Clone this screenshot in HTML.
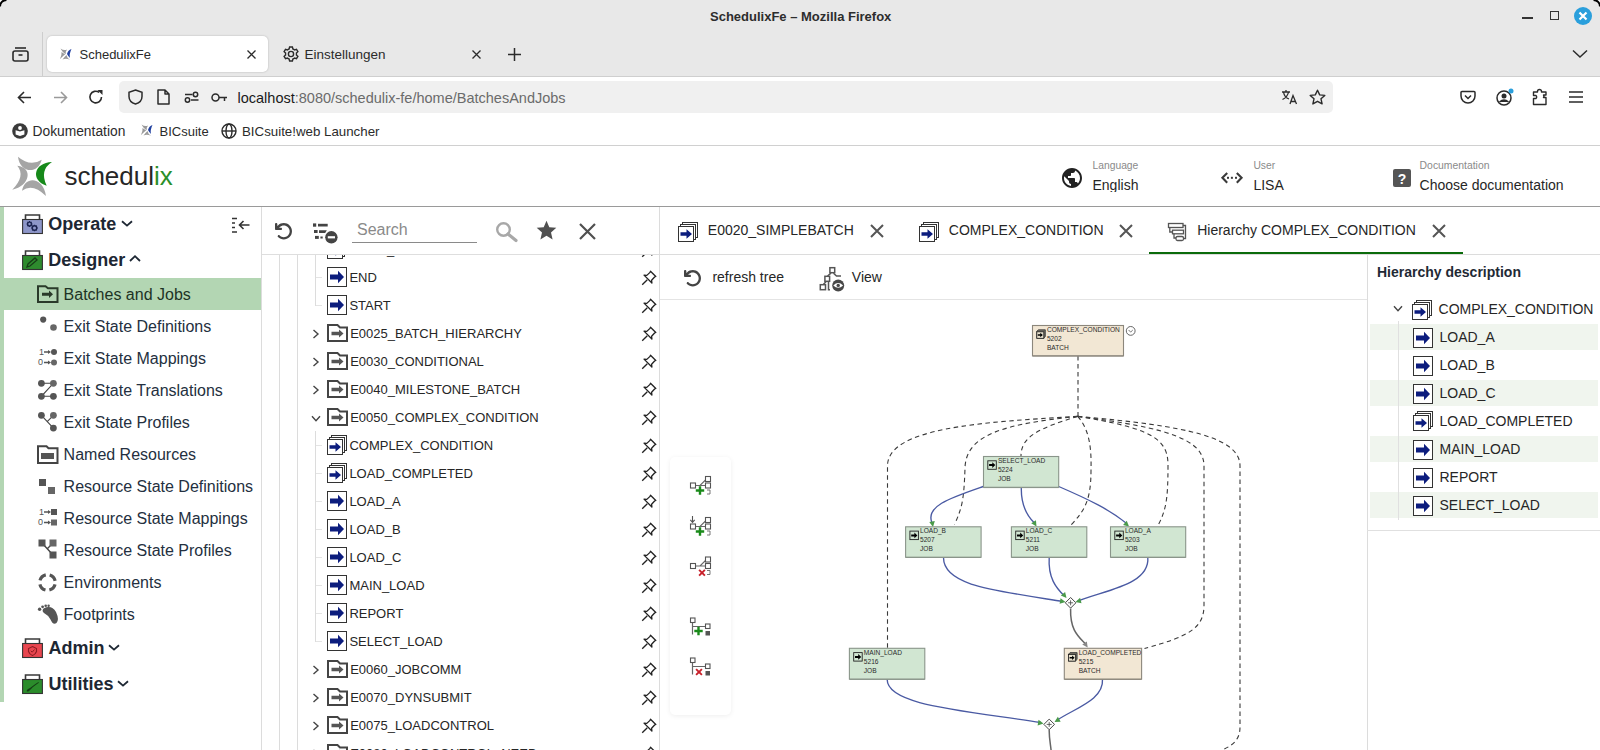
<!DOCTYPE html><html><head><meta charset="utf-8"><style>
html,body{margin:0;padding:0;}
body{width:1600px;height:750px;position:relative;overflow:hidden;background:#fff;font-family:"Liberation Sans",sans-serif;}
.t{position:absolute;white-space:nowrap;}
svg{overflow:visible}
</style></head><body>
<div style="position:absolute;left:0px;top:0px;width:1600px;height:76px;background:#e8e8e8"></div>
<svg style="position:absolute;left:0px;top:0px;" width="10" height="10" viewBox="0 0 10 10"><path d="M0 0H8A8 8 0 0 0 0 8Z" fill="#fff"/><path d="M0 6.5A6.5 6.5 0 0 1 6.5 0" fill="none" stroke="#000" stroke-width="2"/></svg>
<svg style="position:absolute;left:1590px;top:0px;" width="10" height="10" viewBox="0 0 10 10"><path d="M10 0H2A8 8 0 0 1 10 8Z" fill="#fff"/><path d="M3.5 0A6.5 6.5 0 0 1 10 6.5" fill="none" stroke="#000" stroke-width="2"/></svg>
<div class="t" style="left:710px;top:10.00px;font-size:13px;line-height:13px;color:#2d2d2d;font-weight:700;font-family:"Liberation Sans", sans-serif;">SchedulixFe – Mozilla Firefox</div>
<div style="position:absolute;left:1522px;top:17px;width:11px;height:2px;background:#333"></div>
<div style="position:absolute;left:1550px;top:11px;width:9px;height:9px;border:1.6px solid #333;box-sizing:border-box"></div>
<svg style="position:absolute;left:1574px;top:7px;" width="18" height="18" viewBox="0 0 18 18"><circle cx="9" cy="9" r="9" fill="#2a9fdc"/><path d="M5.5 5.5L12.5 12.5M12.5 5.5L5.5 12.5" stroke="#fff" stroke-width="2.2"/></svg>
<div style="position:absolute;left:0px;top:76px;width:1600px;height:1px;background:#cfcfcf"></div>
<svg style="position:absolute;left:12px;top:46px;" width="17" height="16" viewBox="0 0 17 16"><rect x="1" y="5" width="15" height="10" rx="2" fill="none" stroke="#2b2b2b" stroke-width="1.6"/><path d="M3 2H14" stroke="#2b2b2b" stroke-width="1.6"/><path d="M6.5 9H10.5" stroke="#2b2b2b" stroke-width="1.6"/></svg>
<div style="position:absolute;left:42px;top:32px;width:1px;height:44px;background:#cdcdcd"></div>
<div style="position:absolute;left:47px;top:36px;width:221px;height:36px;background:#fff;border-radius:5px;box-shadow:0 0 2px rgba(0,0,0,.25)"></div>
<svg style="position:absolute;left:60px;top:48px;" width="12" height="12" viewBox="0 0 12 12"><path d="M0.5 0.5Q4 3 7 1.5Q5 4 6 6Q3 5 0.5 0.5Z" fill="#9a9a9a"/><path d="M0 11Q2 7 1.5 4Q4 6 5.5 6Q3 8 0 11Z" fill="#9a9a9a"/><path d="M2.5 11.5Q5 8 6.5 7Q7 10 10 11.8Q6 10 2.5 11.5Z" fill="#9a9a9a"/><path d="M11.5 1Q8 2 7 6Q8 8 10 10Q9 6 11.5 1Z" fill="#1f3f9f"/></svg>
<div class="t" style="left:79.5px;top:48.00px;font-size:13px;line-height:13px;color:#2b2b2b;font-weight:400;font-family:"Liberation Sans", sans-serif;">SchedulixFe</div>
<svg style="position:absolute;left:247px;top:50px;" width="9" height="9" viewBox="0 0 9 9"><path d="M0.5 0.5L8.5 8.5M8.5 0.5L0.5 8.5" stroke="#2b2b2b" stroke-width="1.3"/></svg>
<svg style="position:absolute;left:283px;top:46px;" width="16" height="16" viewBox="0 0 16 16"><g fill="none" stroke="#2b2b2b" stroke-width="1.4"><circle cx="8" cy="8" r="2.6"/><path d="M6.6 1H9.4L9.9 3A5.3 5.3 0 0 1 11.6 4L13.5 3.3L14.9 5.7L13.4 7.1A5.3 5.3 0 0 1 13.4 8.9L14.9 10.3L13.5 12.7L11.6 12A5.3 5.3 0 0 1 9.9 13L9.4 15H6.6L6.1 13A5.3 5.3 0 0 1 4.4 12L2.5 12.7L1.1 10.3L2.6 8.9A5.3 5.3 0 0 1 2.6 7.1L1.1 5.7L2.5 3.3L4.4 4A5.3 5.3 0 0 1 6.1 3Z"/></g></svg>
<div class="t" style="left:304.5px;top:48.00px;font-size:13.5px;line-height:13.5px;color:#2b2b2b;font-weight:400;font-family:"Liberation Sans", sans-serif;">Einstellungen</div>
<svg style="position:absolute;left:472px;top:50px;" width="9" height="9" viewBox="0 0 9 9"><path d="M0.5 0.5L8.5 8.5M8.5 0.5L0.5 8.5" stroke="#2b2b2b" stroke-width="1.3"/></svg>
<svg style="position:absolute;left:508px;top:48px;" width="13" height="13" viewBox="0 0 13 13"><path d="M6.5 0V13M0 6.5H13" stroke="#2b2b2b" stroke-width="1.5"/></svg>
<svg style="position:absolute;left:1572px;top:49px;" width="16" height="10" viewBox="0 0 16 10"><path d="M1 1.5L8 8L15 1.5" fill="none" stroke="#2b2b2b" stroke-width="1.5"/></svg>
<div style="position:absolute;left:0px;top:77px;width:1600px;height:68px;background:#fff"></div>
<div style="position:absolute;left:0px;top:145px;width:1600px;height:1px;background:#d0d0d0"></div>
<svg style="position:absolute;left:17px;top:91px;" width="15" height="13" viewBox="0 0 15 13"><path d="M14 6.5H1.5M7 1L1.5 6.5L7 12" fill="none" stroke="#2b2b2b" stroke-width="1.6"/></svg>
<svg style="position:absolute;left:53px;top:91px;" width="15" height="13" viewBox="0 0 15 13"><path d="M1 6.5H13.5M8 1L13.5 6.5L8 12" fill="none" stroke="#9a9a9a" stroke-width="1.6"/></svg>
<svg style="position:absolute;left:88px;top:89px;" width="16" height="16" viewBox="0 0 16 16"><path d="M13.5 8A5.8 5.8 0 1 1 11.2 3.4" fill="none" stroke="#2b2b2b" stroke-width="1.6"/><path d="M9.5 1H14.5V6Z" fill="#2b2b2b"/></svg>
<div style="position:absolute;left:119px;top:81px;width:1214px;height:32px;background:#f0f0f0;border-radius:5px"></div>
<svg style="position:absolute;left:128px;top:89px;" width="15" height="16" viewBox="0 0 15 16"><path d="M7.5 1L14 3.2V7.5C14 11.5 11 14 7.5 15C4 14 1 11.5 1 7.5V3.2Z" fill="none" stroke="#2b2b2b" stroke-width="1.5"/></svg>
<svg style="position:absolute;left:157px;top:89px;" width="13" height="16" viewBox="0 0 13 16"><path d="M1 1H8L12 5V15H1Z M8 1V5H12" fill="none" stroke="#2b2b2b" stroke-width="1.5" stroke-linejoin="round"/></svg>
<svg style="position:absolute;left:184px;top:90px;" width="15" height="14" viewBox="0 0 15 14"><g fill="none" stroke="#2b2b2b" stroke-width="1.5"><path d="M1 4.5H8.5"/><circle cx="11.5" cy="4.5" r="2.2"/><path d="M14.5 10H7"/><circle cx="3.5" cy="10" r="2.2"/></g></svg>
<svg style="position:absolute;left:211px;top:92px;" width="17" height="11" viewBox="0 0 17 11"><g fill="none" stroke="#2b2b2b" stroke-width="1.5"><circle cx="4.5" cy="5.5" r="3.5"/><path d="M8 5.5H16M13.5 5.5V9"/></g></svg>
<div class="t" style="left:237.5px;top:91.00px;font-size:14.5px;line-height:14.5px;color:#6b6b6b;font-weight:400;font-family:"Liberation Sans", sans-serif;"><span style="color:#1a1a1a">localhost</span><span style="color:#6b6b6b">:8080/schedulix-fe/home/BatchesAndJobs</span></div>
<svg style="position:absolute;left:1281px;top:89px;" width="17" height="16" viewBox="0 0 17 16"><g fill="none" stroke="#2b2b2b" stroke-width="1.3"><path d="M1 3H9M5 1V3M2.5 3C3 6 5 9 8 10M7.5 3C7 6 4.5 9 1.5 10.5"/><path d="M9 15L12 6.5L15.5 15M10 12.5H14.5"/></g></svg>
<svg style="position:absolute;left:1309px;top:89px;" width="17" height="16" viewBox="0 0 17 16"><path d="M8.5 1.2L10.7 5.9L15.8 6.4L12 9.8L13.1 14.9L8.5 12.3L3.9 14.9L5 9.8L1.2 6.4L6.3 5.9Z" fill="none" stroke="#2b2b2b" stroke-width="1.4" stroke-linejoin="round"/></svg>
<svg style="position:absolute;left:1460px;top:89px;" width="16" height="16" viewBox="0 0 16 16"><path d="M2 2.5H14A1 1 0 0 1 15 3.5V7A7 7 0 0 1 1 7V3.5A1 1 0 0 1 2 2.5Z" fill="none" stroke="#2b2b2b" stroke-width="1.5"/><path d="M5 6.5L8 9.5L11 6.5" fill="none" stroke="#2b2b2b" stroke-width="1.5"/></svg>
<svg style="position:absolute;left:1496px;top:88px;" width="19" height="18" viewBox="0 0 19 18"><circle cx="8" cy="10" r="7" fill="none" stroke="#2b2b2b" stroke-width="1.5"/><circle cx="8" cy="8" r="2.5" fill="#2b2b2b"/><path d="M3.5 14Q8 10 12.5 14" fill="#2b2b2b" stroke="#2b2b2b" stroke-width="1.5"/><circle cx="15" cy="3" r="2.5" fill="#2a9fdc"/></svg>
<svg style="position:absolute;left:1532px;top:89px;" width="17" height="17" viewBox="0 0 17 17"><path d="M1.5 9.5V15.5H14V8.5H11.5A2 2 0 0 0 11.5 6H14V3H9.5V2.5A2 2 0 0 0 5.5 2.5V3H1.5V6.5H4A2 2 0 0 1 4 9.5Z" fill="none" stroke="#2b2b2b" stroke-width="1.4" stroke-linejoin="round"/></svg>
<svg style="position:absolute;left:1568px;top:90px;" width="16" height="14" viewBox="0 0 16 14"><path d="M1 2H15M1 7H15M1 12H15" stroke="#2b2b2b" stroke-width="1.6"/></svg>
<svg style="position:absolute;left:12px;top:123px;" width="16" height="16" viewBox="0 0 16 16"><circle cx="8" cy="8" r="7.8" fill="#3a3a3a"/><path d="M3.6 7.2L8 8.6L12.4 7.2V11.6L8 13L3.6 11.6Z" fill="#fff"/><circle cx="8" cy="5" r="1.9" fill="#fff"/></svg>
<div class="t" style="left:32.5px;top:125.00px;font-size:13.8px;line-height:13.8px;color:#2b2b2b;font-weight:400;font-family:"Liberation Sans", sans-serif;">Dokumentation</div>
<svg style="position:absolute;left:141px;top:124px;" width="12" height="13" viewBox="0 0 12 13"><path d="M0.5 0.5Q4 3 7 1.5Q5 4 6 6Q3 5 0.5 0.5Z" fill="#9a9a9a"/><path d="M0 11Q2 7 1.5 4Q4 6 5.5 6Q3 8 0 11Z" fill="#9a9a9a"/><path d="M2.5 11.5Q5 8 6.5 7Q7 10 10 11.8Q6 10 2.5 11.5Z" fill="#9a9a9a"/><path d="M11.5 1Q8 2 7 6Q8 8 10 10Q9 6 11.5 1Z" fill="#1f3f9f"/></svg>
<div class="t" style="left:159.5px;top:125.00px;font-size:13px;line-height:13px;color:#2b2b2b;font-weight:400;font-family:"Liberation Sans", sans-serif;">BICsuite</div>
<svg style="position:absolute;left:221px;top:123px;" width="16" height="16" viewBox="0 0 16 16"><g fill="none" stroke="#2b2b2b" stroke-width="1.4"><circle cx="8" cy="8" r="7"/><ellipse cx="8" cy="8" rx="3" ry="7"/><path d="M1 8H15"/></g></svg>
<div class="t" style="left:242px;top:125.00px;font-size:13.3px;line-height:13.3px;color:#2b2b2b;font-weight:400;font-family:"Liberation Sans", sans-serif;">BICsuite!web Launcher</div>
<div style="position:absolute;left:0px;top:146px;width:1600px;height:60px;background:#fff"></div>
<div style="position:absolute;left:0px;top:206px;width:1600px;height:1px;background:#9a9a9a"></div>
<svg style="position:absolute;left:10px;top:154px;" width="46" height="46" viewBox="0 0 46 46"><g transform="translate(-10,-154)"><path d="M18.0 156.7Q30.1 167.2 41.7 159.7C37.7 175.1 19.7 172.8 18.0 156.7Z" fill="#a5a5a5"/><path d="M17.3 165.7Q25.8 175.7 12.3 189.7C29.8 185.9 33.6 167.6 17.3 165.7Z" fill="#a5a5a5"/><path d="M22.0 190.7Q32.6 182.7 46.0 196.0C43.8 178.2 25.5 174.2 22.0 190.7Z" fill="#a5a5a5"/><path d="M52.0 162.0Q39.2 170.2 46.7 185.7C29.9 180.4 34.0 162.4 52.0 162.0Z" fill="#16891a"/></g></svg>
<div class="t" style="left:64.4px;top:163.00px;font-size:26px;line-height:26px;color:#262626;font-weight:400;font-family:"Liberation Sans", sans-serif;">schedul<span style="color:#2a8f2a">ix</span></div>
<svg style="position:absolute;left:1062px;top:168px" width="20" height="20" viewBox="2 2 20 20"><path fill="#222" d="M12 2C6.48 2 2 6.48 2 12s4.48 10 10 10 10-4.48 10-10S17.52 2 12 2zm-1 17.93c-3.950-.49-7-3.85-7-7.930 0-.62.08-1.21.21-1.79L9 15v1c0 1.1.9 2 2 2v1.93zm6.9-2.54c-.26-.81-1-1.39-1.9-1.39h-1v-3c0-.55-.45-1-1-1H8v-2h2c.55 0 1-.45 1-1V7h2c1.1 0 2-.9 2-2v-.41c2.93 1.19 5 4.06 5 7.41 0 2.080-.8 3.970-2.1 5.39z"/></svg>
<div class="t" style="left:1092.5px;top:161.00px;font-size:10.3px;line-height:10.3px;color:#8a8a8a;font-weight:400;font-family:"Liberation Sans", sans-serif;">Language</div>
<div style="position:absolute;left:1090px;top:172px;width:100px;height:20px;overflow:hidden"></div>
<div style="position:absolute;left:1092.5px;top:172px;width:100px;height:20px;overflow:hidden"><div class="t" style="left:0;top:5.95px;font-size:14px;line-height:14px;color:#262626">English</div></div>
<svg style="position:absolute;left:1221px;top:172px;" width="22" height="12" viewBox="0 0 22 12"><g fill="none" stroke="#3a3a3a" stroke-width="2.1"><path d="M6.2 0.9L1.4 5.8L6.2 10.7M15.8 0.9L20.6 5.8L15.8 10.7"/></g><g fill="#3a3a3a"><rect x="6" y="4.8" width="2" height="2"/><rect x="9.9" y="4.8" width="2" height="2"/><rect x="14" y="4.8" width="2" height="2"/></g></svg>
<div class="t" style="left:1253.4px;top:161.00px;font-size:10.3px;line-height:10.3px;color:#8a8a8a;font-weight:400;font-family:"Liberation Sans", sans-serif;">User</div>
<div class="t" style="left:1253.4px;top:178.00px;font-size:14px;line-height:14px;color:#262626;font-weight:400;font-family:"Liberation Sans", sans-serif;">LISA</div>
<svg style="position:absolute;left:1393px;top:169px;" width="18" height="18" viewBox="0 0 18 18"><rect x="0" y="0" width="18" height="18" rx="2" fill="#555"/><text x="9" y="14.5" text-anchor="middle" font-family="Liberation Sans" font-weight="700" font-size="14" fill="#fff">?</text></svg>
<div class="t" style="left:1419.6px;top:161.00px;font-size:10.4px;line-height:10.4px;color:#8a8a8a;font-weight:400;font-family:"Liberation Sans", sans-serif;">Documentation</div>
<div class="t" style="left:1419.6px;top:178.00px;font-size:14px;line-height:14px;color:#262626;font-weight:400;font-family:"Liberation Sans", sans-serif;">Choose documentation</div>
<div style="position:absolute;left:0px;top:207px;width:4px;height:495px;background:#b3d6b3"></div>
<div style="position:absolute;left:261px;top:207px;width:1px;height:543px;background:#dcdcdc"></div>
<svg style="position:absolute;left:22px;top:214px;" width="21" height="20" viewBox="0 0 21 20"><path d="M3.5 5.5V1H17.5V5.5" fill="none" stroke="#3a3a3a" stroke-width="1.6"/><rect x="0.6" y="5.5" width="19.8" height="14" fill="#8d96c9" stroke="#333" stroke-width="1.1"/><g fill="none" stroke="#1b2350" stroke-width="1.3"><circle cx="7.5" cy="10" r="1.9"/><circle cx="12.5" cy="14" r="2.3"/></g><g stroke="#1b2350" stroke-width="1.2"><path d="M7.5 7V13M4.5 10H10.5M5.4 7.9L9.6 12.1M9.6 7.9L5.4 12.1"/><path d="M12.5 10.7V17.3M9.2 14H15.8M10.2 11.7L14.8 16.3M14.8 11.7L10.2 16.3"/></g><circle cx="7.5" cy="10" r="1.2" fill="#8d96c9"/><circle cx="12.5" cy="14" r="1.5" fill="#8d96c9"/></svg>
<div class="t" style="left:48.3px;top:215.00px;font-size:18px;line-height:18px;color:#1d2733;font-weight:700;font-family:"Liberation Sans", sans-serif;letter-spacing:-0.75px">Operate</div>
<svg style="position:absolute;left:121px;top:220px;" width="12" height="7" viewBox="0 0 12 7"><path d="M1 1.2L6.0 5.6L11 1.2" fill="none" stroke="#1d2733" stroke-width="1.8"/></svg>
<svg style="position:absolute;left:231px;top:217px;" width="20" height="17" viewBox="0 0 20 17"><g stroke="#333" stroke-width="1.6"><path d="M1 1.5H6M1 6H4M1 10.5H4M1 15H6"/><path d="M18.5 8H9M12.5 4L8.5 8L12.5 12" fill="none"/></g></svg>
<svg style="position:absolute;left:22px;top:250px;" width="21" height="20" viewBox="0 0 21 20"><path d="M3.5 5.5V1H17.5V5.5" fill="none" stroke="#3a3a3a" stroke-width="1.6"/><rect x="0.6" y="5.5" width="19.8" height="14" fill="#2e8b2e" stroke="#333" stroke-width="1.1"/><path d="M5 17L6 14L13 8L15 10L8 16Z" fill="none" stroke="#173d17" stroke-width="1.3"/></svg>
<div class="t" style="left:48.3px;top:251.00px;font-size:18px;line-height:18px;color:#1d2733;font-weight:700;font-family:"Liberation Sans", sans-serif;letter-spacing:-0.62px">Designer</div>
<svg style="position:absolute;left:129px;top:255px;" width="12" height="7" viewBox="0 0 12 7"><path d="M1 6L6 1.2L11 6" fill="none" stroke="#1d2733" stroke-width="1.8"/></svg>
<div style="position:absolute;left:0px;top:278px;width:261px;height:32px;background:#b3d6b3"></div>
<div class="t" style="left:63.6px;top:287.00px;font-size:16px;line-height:16px;color:#1d3325;font-weight:400;font-family:"Liberation Sans", sans-serif;">Batches and Jobs</div>
<div class="t" style="left:63.6px;top:319.00px;font-size:16px;line-height:16px;color:#243040;font-weight:400;font-family:"Liberation Sans", sans-serif;">Exit State Definitions</div>
<div class="t" style="left:63.6px;top:351.00px;font-size:16px;line-height:16px;color:#243040;font-weight:400;font-family:"Liberation Sans", sans-serif;">Exit State Mappings</div>
<div class="t" style="left:63.6px;top:383.00px;font-size:16px;line-height:16px;color:#243040;font-weight:400;font-family:"Liberation Sans", sans-serif;">Exit State Translations</div>
<div class="t" style="left:63.6px;top:415.00px;font-size:16px;line-height:16px;color:#243040;font-weight:400;font-family:"Liberation Sans", sans-serif;">Exit State Profiles</div>
<div class="t" style="left:63.6px;top:447.00px;font-size:16px;line-height:16px;color:#243040;font-weight:400;font-family:"Liberation Sans", sans-serif;">Named Resources</div>
<div class="t" style="left:63.6px;top:479.00px;font-size:16px;line-height:16px;color:#243040;font-weight:400;font-family:"Liberation Sans", sans-serif;">Resource State Definitions</div>
<div class="t" style="left:63.6px;top:511.00px;font-size:16px;line-height:16px;color:#243040;font-weight:400;font-family:"Liberation Sans", sans-serif;">Resource State Mappings</div>
<div class="t" style="left:63.6px;top:543.00px;font-size:16px;line-height:16px;color:#243040;font-weight:400;font-family:"Liberation Sans", sans-serif;">Resource State Profiles</div>
<div class="t" style="left:63.6px;top:575.00px;font-size:16px;line-height:16px;color:#243040;font-weight:400;font-family:"Liberation Sans", sans-serif;">Environments</div>
<div class="t" style="left:63.6px;top:607.00px;font-size:16px;line-height:16px;color:#243040;font-weight:400;font-family:"Liberation Sans", sans-serif;">Footprints</div>
<svg style="position:absolute;left:37px;top:285px;" width="22" height="19" viewBox="0 0 22 19"><path d="M1 17V1.2H8.5L11 3.2H20.5V17Z" fill="none" stroke="#2a3a2a" stroke-width="2"/><path d="M5 7.8H12V5.5L16 9.3L12 13.1V10.8H5Z" fill="#2a3a2a"/></svg>
<svg style="position:absolute;left:37px;top:314px;" width="22" height="18" viewBox="0 0 22 18"><circle cx="6.2" cy="5.6" r="3.1" fill="#555"/><circle cx="16.5" cy="13.5" r="3.3" fill="#666"/></svg>
<svg style="position:absolute;left:37px;top:346px;" width="22" height="20" viewBox="0 0 22 20"><text x="2" y="8.5" font-family="Liberation Sans" font-size="9" fill="#555">1</text><text x="1" y="19" font-family="Liberation Sans" font-size="9" fill="#555">0</text><path d="M7 6H12M7 16.5H12" stroke="#555" stroke-width="1.3"/><path d="M11 4L14 6L11 8ZM11 14.5L14 16.5L11 18.5Z" fill="#555"/><circle cx="17" cy="6" r="3" fill="#555"/><circle cx="17" cy="16.5" r="3" fill="#666"/></svg>
<svg style="position:absolute;left:37px;top:378px;" width="22" height="22" viewBox="0 0 22 22"><g stroke="#444" stroke-width="1.1" fill="none"><path d="M4.4 5.3H16.4L4.4 18.3H16.4"/></g><circle cx="4.4" cy="5.3" r="3.4" fill="#555"/><circle cx="16.4" cy="5.3" r="3.4" fill="#666"/><circle cx="4.4" cy="18.3" r="3.4" fill="#555"/><circle cx="16.4" cy="18.3" r="3.4" fill="#555"/></svg>
<svg style="position:absolute;left:37px;top:410px;" width="22" height="22" viewBox="0 0 22 22"><g stroke="#444" stroke-width="1.1" fill="none"><path d="M4.4 5.3L16.4 18.1M16.4 5.3L10.2 11.7"/></g><circle cx="4.4" cy="5.3" r="3.4" fill="#555"/><circle cx="16.4" cy="5.3" r="3.4" fill="#666"/><circle cx="16.4" cy="18.1" r="3.4" fill="#555"/></svg>
<svg style="position:absolute;left:37px;top:445px;" width="22" height="19" viewBox="0 0 22 19"><path d="M1 18V1.2H9.5L11.5 3.2H20.5V18Z" fill="none" stroke="#444" stroke-width="2"/><rect x="4" y="8" width="13" height="6" fill="#555"/></svg>
<svg style="position:absolute;left:37px;top:477px;" width="22" height="20" viewBox="0 0 22 20"><rect x="2" y="2" width="7" height="7" fill="#555"/><rect x="11" y="10" width="7" height="7" fill="#666"/></svg>
<svg style="position:absolute;left:37px;top:506px;" width="22" height="20" viewBox="0 0 22 20"><text x="2" y="8.5" font-family="Liberation Sans" font-size="9" fill="#555">1</text><text x="1" y="19" font-family="Liberation Sans" font-size="9" fill="#555">0</text><path d="M7 6H12M7 16.5H12" stroke="#555" stroke-width="1.3"/><path d="M11 4L14 6L11 8ZM11 14.5L14 16.5L11 18.5Z" fill="#555"/><rect x="14" y="3" width="6" height="6" fill="#555"/><rect x="14" y="13.5" width="6" height="6" fill="#666"/></svg>
<svg style="position:absolute;left:37px;top:538px;" width="22" height="22" viewBox="0 0 22 22"><g stroke="#444" stroke-width="1.4" fill="none"><path d="M5 5L16 17M15.5 5.5L10 11"/></g><rect x="1.5" y="1.5" width="7" height="7" fill="#555"/><rect x="12.5" y="1.5" width="7" height="7" fill="#666"/><rect x="12.5" y="13.5" width="7" height="7" fill="#555"/></svg>
<svg style="position:absolute;left:37px;top:572px;" width="22" height="22" viewBox="0 0 22 22"><circle cx="10.5" cy="10.5" r="7.8" fill="none" stroke="#555" stroke-width="3.2" stroke-dasharray="8.25 4" stroke-dashoffset="10.25"/></svg>
<svg style="position:absolute;left:37px;top:603px;" width="22" height="22" viewBox="0 0 22 22"><path d="M6.5 5.5Q14.5 1.5 19 9Q22.5 16.5 19.5 20Q16 22.5 13.5 16.5Q11 12 7 10Q4.5 8 6.5 5.5Z" fill="#555"/><circle cx="2.6" cy="6.2" r="1.7" fill="#555"/><circle cx="5.6" cy="3.8" r="1.4" fill="#555"/><circle cx="8.7" cy="2.7" r="1.3" fill="#555"/><circle cx="11.6" cy="2.8" r="1.2" fill="#555"/></svg>
<svg style="position:absolute;left:22px;top:638px;" width="21" height="20" viewBox="0 0 21 20"><path d="M3.5 5.5V1H17.5V5.5" fill="none" stroke="#3a3a3a" stroke-width="1.6"/><rect x="0.6" y="5.5" width="19.8" height="14" fill="#e8464f" stroke="#333" stroke-width="1.1"/><path d="M10.5 8.5L14.5 10.5V13.5Q13.5 16.5 10.5 17.5Q7.5 16.5 6.5 13.5V10.5Z" fill="none" stroke="#8c1c22" stroke-width="1.1"/><path d="M8.8 12.8L10.2 14.2L12.5 11.5" fill="none" stroke="#8c1c22" stroke-width="1"/></svg>
<div class="t" style="left:48.5px;top:639.00px;font-size:18px;line-height:18px;color:#1d2733;font-weight:700;font-family:"Liberation Sans", sans-serif;letter-spacing:-0.5px">Admin</div>
<svg style="position:absolute;left:108px;top:644px;" width="12" height="7" viewBox="0 0 12 7"><path d="M1 1.2L6.0 5.6L11 1.2" fill="none" stroke="#1d2733" stroke-width="1.8"/></svg>
<svg style="position:absolute;left:22px;top:674px;" width="21" height="20" viewBox="0 0 21 20"><path d="M3.5 5.5V1H17.5V5.5" fill="none" stroke="#3a3a3a" stroke-width="1.6"/><rect x="0.6" y="5.5" width="19.8" height="14" fill="#2b8c2b" stroke="#333" stroke-width="1.1"/><path d="M17 8Q16 8 12 11L8 14Q5 15 4.5 17Q6 18.5 8 16L11 13Q15 10 16.5 9Z" fill="#143d14"/></svg>
<div class="t" style="left:48.5px;top:675.00px;font-size:18px;line-height:18px;color:#1d2733;font-weight:700;font-family:"Liberation Sans", sans-serif;letter-spacing:-0.42px">Utilities</div>
<svg style="position:absolute;left:117px;top:680px;" width="12" height="7" viewBox="0 0 12 7"><path d="M1 1.2L6.0 5.6L11 1.2" fill="none" stroke="#1d2733" stroke-width="1.8"/></svg>
<div style="position:absolute;left:659px;top:207px;width:1px;height:543px;background:#dcdcdc"></div>
<div style="position:absolute;left:262px;top:254px;width:397px;height:1px;background:#dedede"></div>
<svg style="position:absolute;left:274.5px;top:222.5px" width="17" height="17" viewBox="16 30 464 464"><path fill="#444" d="M125.7 160H176c17.7 0 32 14.3 32 32s-14.3 32-32 32H48c-17.7 0-32-14.3-32-32V64c0-17.7 14.3-32 32-32s32 14.3 32 32v51.2L97.6 97.6c87.5-87.5 229.3-87.5 316.8 0s87.5 229.3 0 316.8s-229.3 87.5-316.8 0c-12.5-12.5-12.5-32.8 0-45.3s32.8-12.5 45.3 0c62.5 62.5 163.8 62.5 226.3 0s62.5-163.8 0-226.3s-163.8-62.5-226.3 0L125.7 160z"/></svg>
<svg style="position:absolute;left:312px;top:222px;" width="27" height="22" viewBox="0 0 27 22"><g fill="#444"><rect x="1" y="1.4" width="3.2" height="3.3"/><rect x="6" y="1.8" width="9.7" height="2.7"/><rect x="2" y="8" width="3.6" height="3"/><path d="M7 8.3H14.8L13.2 11H7Z"/><rect x="3" y="13.9" width="3.8" height="3"/><rect x="8.4" y="14.5" width="2.3" height="2"/></g><circle cx="19.4" cy="15.3" r="6.2" fill="#444"/><rect x="15.8" y="14.2" width="7.2" height="2.2" fill="#fff"/></svg>
<div class="t" style="left:357px;top:222.00px;font-size:16px;line-height:16px;color:#8a8a8a;font-weight:400;font-family:"Liberation Sans", sans-serif;letter-spacing:-0.2px">Search</div>
<div style="position:absolute;left:352px;top:242px;width:125px;height:1px;background:#8a8a8a"></div>
<svg style="position:absolute;left:495px;top:221px;" width="23" height="20" viewBox="0 0 23 20"><circle cx="8.5" cy="8.5" r="6.3" fill="none" stroke="#a8a8a8" stroke-width="2.4"/><path d="M13 13L21 19.5" stroke="#a8a8a8" stroke-width="3.2" stroke-linecap="round"/></svg>
<svg style="position:absolute;left:536px;top:220px;" width="21" height="21" viewBox="0 0 21 21"><path d="M10.5 0.8L13.3 7.3L20.3 7.8L15 12.4L16.6 19.5L10.5 15.8L4.4 19.5L6 12.4L0.7 7.8L7.7 7.3Z" fill="#505050"/></svg>
<svg style="position:absolute;left:579px;top:223px;" width="17" height="17" viewBox="0 0 17 17"><path d="M1 1L16 16M16 1L1 16" stroke="#505050" stroke-width="2.2"/></svg>
<div style="position:absolute;left:262px;top:255px;width:397px;height:495px;overflow:hidden">
<div style="position:absolute;left:17px;top:0px;width:1px;height:495px;background:#dcdcdc"></div>
<div style="position:absolute;left:35px;top:0px;width:1px;height:495px;background:#dcdcdc"></div>
<div style="position:absolute;left:53px;top:-15px;width:1px;height:65.5px;background:#dcdcdc"></div>
<div style="position:absolute;left:53px;top:176px;width:1px;height:210.5px;background:#dcdcdc"></div>
<div style="position:absolute;left:54px;top:-6px;width:6px;height:1px;background:#e4e4e4"></div>
<svg style="position:absolute;left:65px;top:-16px;" width="20" height="20" viewBox="0 0 20 20"><rect x="4.5" y="0.5" width="15" height="15" fill="#fff" stroke="#333"/><rect x="2.5" y="2.5" width="15" height="15" fill="#fff" stroke="#333"/><rect x="0.5" y="4.5" width="15" height="15" fill="#fff" stroke="#333"/><path d="M2.5 10.3H8.5V7.2L14 12L8.5 16.8V13.7H2.5Z" fill="#0c1d7e"/></svg>
<div class="t" style="left:87.39999999999998px;top:-12.00px;font-size:13px;line-height:13px;color:#262626;font-weight:400;font-family:"Liberation Sans", sans-serif;">E0020_SIMPLEBATCH</div>
<svg style="position:absolute;left:379px;top:-13px;" width="16" height="16" viewBox="0 0 16 16"><g fill="none" stroke="#222" stroke-width="1.3" stroke-linejoin="round"><path d="M9.5 1.2L14.8 6.5L13.6 7L10.6 10.2L10.9 13L3 5.1L5.8 5.4L9 2.4Z"/><path d="M6.3 9.7L1.2 14.8"/></g></svg>
<div style="position:absolute;left:54px;top:22px;width:6px;height:1px;background:#e4e4e4"></div>
<svg style="position:absolute;left:65px;top:12px;" width="20" height="20" viewBox="0 0 20 20"><rect x="0.5" y="0.5" width="19" height="19" fill="#fff" stroke="#333" stroke-width="1"/><path d="M3 7.5H11V3.7L17 10L11 16.3V12.5H3Z" fill="#0c1d7e"/></svg>
<div class="t" style="left:87.39999999999998px;top:16.00px;font-size:13px;line-height:13px;color:#262626;font-weight:400;font-family:"Liberation Sans", sans-serif;">END</div>
<svg style="position:absolute;left:379px;top:15px;" width="16" height="16" viewBox="0 0 16 16"><g fill="none" stroke="#222" stroke-width="1.3" stroke-linejoin="round"><path d="M9.5 1.2L14.8 6.5L13.6 7L10.6 10.2L10.9 13L3 5.1L5.8 5.4L9 2.4Z"/><path d="M6.3 9.7L1.2 14.8"/></g></svg>
<div style="position:absolute;left:54px;top:50px;width:6px;height:1px;background:#e4e4e4"></div>
<svg style="position:absolute;left:65px;top:40px;" width="20" height="20" viewBox="0 0 20 20"><rect x="0.5" y="0.5" width="19" height="19" fill="#fff" stroke="#333" stroke-width="1"/><path d="M3 7.5H11V3.7L17 10L11 16.3V12.5H3Z" fill="#0c1d7e"/></svg>
<div class="t" style="left:87.39999999999998px;top:44.00px;font-size:13px;line-height:13px;color:#262626;font-weight:400;font-family:"Liberation Sans", sans-serif;">START</div>
<svg style="position:absolute;left:379px;top:43px;" width="16" height="16" viewBox="0 0 16 16"><g fill="none" stroke="#222" stroke-width="1.3" stroke-linejoin="round"><path d="M9.5 1.2L14.8 6.5L13.6 7L10.6 10.2L10.9 13L3 5.1L5.8 5.4L9 2.4Z"/><path d="M6.3 9.7L1.2 14.8"/></g></svg>
<svg style="position:absolute;left:65px;top:69px;" width="21" height="19" viewBox="0 0 21 19"><path d="M1 17V1H10.5L13 3.5H20V17Z" fill="#fff" stroke="#444" stroke-width="2" stroke-linejoin="miter"/><path d="M4.5 7.8H12V5.5L16.5 9.5L12 13.5V11.2H4.5Z" fill="#555"/></svg>
<div class="t" style="left:88.19999999999999px;top:72.00px;font-size:13px;line-height:13px;color:#262626;font-weight:400;font-family:"Liberation Sans", sans-serif;">E0025_BATCH_HIERARCHY</div>
<svg style="position:absolute;left:49.5px;top:73.5px;" width="8" height="10" viewBox="0 0 8 10"><path d="M1.5 1L6 5L1.5 9" fill="none" stroke="#444" stroke-width="1.4"/></svg>
<svg style="position:absolute;left:379px;top:71px;" width="16" height="16" viewBox="0 0 16 16"><g fill="none" stroke="#222" stroke-width="1.3" stroke-linejoin="round"><path d="M9.5 1.2L14.8 6.5L13.6 7L10.6 10.2L10.9 13L3 5.1L5.8 5.4L9 2.4Z"/><path d="M6.3 9.7L1.2 14.8"/></g></svg>
<svg style="position:absolute;left:65px;top:97px;" width="21" height="19" viewBox="0 0 21 19"><path d="M1 17V1H10.5L13 3.5H20V17Z" fill="#fff" stroke="#444" stroke-width="2" stroke-linejoin="miter"/><path d="M4.5 7.8H12V5.5L16.5 9.5L12 13.5V11.2H4.5Z" fill="#555"/></svg>
<div class="t" style="left:88.19999999999999px;top:100.00px;font-size:13px;line-height:13px;color:#262626;font-weight:400;font-family:"Liberation Sans", sans-serif;">E0030_CONDITIONAL</div>
<svg style="position:absolute;left:49.5px;top:101.5px;" width="8" height="10" viewBox="0 0 8 10"><path d="M1.5 1L6 5L1.5 9" fill="none" stroke="#444" stroke-width="1.4"/></svg>
<svg style="position:absolute;left:379px;top:99px;" width="16" height="16" viewBox="0 0 16 16"><g fill="none" stroke="#222" stroke-width="1.3" stroke-linejoin="round"><path d="M9.5 1.2L14.8 6.5L13.6 7L10.6 10.2L10.9 13L3 5.1L5.8 5.4L9 2.4Z"/><path d="M6.3 9.7L1.2 14.8"/></g></svg>
<svg style="position:absolute;left:65px;top:125px;" width="21" height="19" viewBox="0 0 21 19"><path d="M1 17V1H10.5L13 3.5H20V17Z" fill="#fff" stroke="#444" stroke-width="2" stroke-linejoin="miter"/><path d="M4.5 7.8H12V5.5L16.5 9.5L12 13.5V11.2H4.5Z" fill="#555"/></svg>
<div class="t" style="left:88.19999999999999px;top:128.00px;font-size:13px;line-height:13px;color:#262626;font-weight:400;font-family:"Liberation Sans", sans-serif;">E0040_MILESTONE_BATCH</div>
<svg style="position:absolute;left:49.5px;top:129.5px;" width="8" height="10" viewBox="0 0 8 10"><path d="M1.5 1L6 5L1.5 9" fill="none" stroke="#444" stroke-width="1.4"/></svg>
<svg style="position:absolute;left:379px;top:127px;" width="16" height="16" viewBox="0 0 16 16"><g fill="none" stroke="#222" stroke-width="1.3" stroke-linejoin="round"><path d="M9.5 1.2L14.8 6.5L13.6 7L10.6 10.2L10.9 13L3 5.1L5.8 5.4L9 2.4Z"/><path d="M6.3 9.7L1.2 14.8"/></g></svg>
<svg style="position:absolute;left:65px;top:153px;" width="21" height="19" viewBox="0 0 21 19"><path d="M1 17V1H10.5L13 3.5H20V17Z" fill="#fff" stroke="#444" stroke-width="2" stroke-linejoin="miter"/><path d="M4.5 7.8H12V5.5L16.5 9.5L12 13.5V11.2H4.5Z" fill="#555"/></svg>
<div class="t" style="left:88.19999999999999px;top:156.00px;font-size:13px;line-height:13px;color:#262626;font-weight:400;font-family:"Liberation Sans", sans-serif;">E0050_COMPLEX_CONDITION</div>
<svg style="position:absolute;left:48.5px;top:159.5px;" width="10" height="7" viewBox="0 0 10 7"><path d="M1 1.2L5.0 5.6L9 1.2" fill="none" stroke="#444" stroke-width="1.4"/></svg>
<svg style="position:absolute;left:379px;top:155px;" width="16" height="16" viewBox="0 0 16 16"><g fill="none" stroke="#222" stroke-width="1.3" stroke-linejoin="round"><path d="M9.5 1.2L14.8 6.5L13.6 7L10.6 10.2L10.9 13L3 5.1L5.8 5.4L9 2.4Z"/><path d="M6.3 9.7L1.2 14.8"/></g></svg>
<div style="position:absolute;left:54px;top:190px;width:6px;height:1px;background:#e4e4e4"></div>
<svg style="position:absolute;left:65px;top:180px;" width="20" height="20" viewBox="0 0 20 20"><rect x="4.5" y="0.5" width="15" height="15" fill="#fff" stroke="#333"/><rect x="2.5" y="2.5" width="15" height="15" fill="#fff" stroke="#333"/><rect x="0.5" y="4.5" width="15" height="15" fill="#fff" stroke="#333"/><path d="M2.5 10.3H8.5V7.2L14 12L8.5 16.8V13.7H2.5Z" fill="#0c1d7e"/></svg>
<div class="t" style="left:87.39999999999998px;top:184.00px;font-size:13px;line-height:13px;color:#262626;font-weight:400;font-family:"Liberation Sans", sans-serif;">COMPLEX_CONDITION</div>
<svg style="position:absolute;left:379px;top:183px;" width="16" height="16" viewBox="0 0 16 16"><g fill="none" stroke="#222" stroke-width="1.3" stroke-linejoin="round"><path d="M9.5 1.2L14.8 6.5L13.6 7L10.6 10.2L10.9 13L3 5.1L5.8 5.4L9 2.4Z"/><path d="M6.3 9.7L1.2 14.8"/></g></svg>
<div style="position:absolute;left:54px;top:218px;width:6px;height:1px;background:#e4e4e4"></div>
<svg style="position:absolute;left:65px;top:208px;" width="20" height="20" viewBox="0 0 20 20"><rect x="4.5" y="0.5" width="15" height="15" fill="#fff" stroke="#333"/><rect x="2.5" y="2.5" width="15" height="15" fill="#fff" stroke="#333"/><rect x="0.5" y="4.5" width="15" height="15" fill="#fff" stroke="#333"/><path d="M2.5 10.3H8.5V7.2L14 12L8.5 16.8V13.7H2.5Z" fill="#0c1d7e"/></svg>
<div class="t" style="left:87.39999999999998px;top:212.00px;font-size:13px;line-height:13px;color:#262626;font-weight:400;font-family:"Liberation Sans", sans-serif;">LOAD_COMPLETED</div>
<svg style="position:absolute;left:379px;top:211px;" width="16" height="16" viewBox="0 0 16 16"><g fill="none" stroke="#222" stroke-width="1.3" stroke-linejoin="round"><path d="M9.5 1.2L14.8 6.5L13.6 7L10.6 10.2L10.9 13L3 5.1L5.8 5.4L9 2.4Z"/><path d="M6.3 9.7L1.2 14.8"/></g></svg>
<div style="position:absolute;left:54px;top:246px;width:6px;height:1px;background:#e4e4e4"></div>
<svg style="position:absolute;left:65px;top:236px;" width="20" height="20" viewBox="0 0 20 20"><rect x="0.5" y="0.5" width="19" height="19" fill="#fff" stroke="#333" stroke-width="1"/><path d="M3 7.5H11V3.7L17 10L11 16.3V12.5H3Z" fill="#0c1d7e"/></svg>
<div class="t" style="left:87.39999999999998px;top:240.00px;font-size:13px;line-height:13px;color:#262626;font-weight:400;font-family:"Liberation Sans", sans-serif;">LOAD_A</div>
<svg style="position:absolute;left:379px;top:239px;" width="16" height="16" viewBox="0 0 16 16"><g fill="none" stroke="#222" stroke-width="1.3" stroke-linejoin="round"><path d="M9.5 1.2L14.8 6.5L13.6 7L10.6 10.2L10.9 13L3 5.1L5.8 5.4L9 2.4Z"/><path d="M6.3 9.7L1.2 14.8"/></g></svg>
<div style="position:absolute;left:54px;top:274px;width:6px;height:1px;background:#e4e4e4"></div>
<svg style="position:absolute;left:65px;top:264px;" width="20" height="20" viewBox="0 0 20 20"><rect x="0.5" y="0.5" width="19" height="19" fill="#fff" stroke="#333" stroke-width="1"/><path d="M3 7.5H11V3.7L17 10L11 16.3V12.5H3Z" fill="#0c1d7e"/></svg>
<div class="t" style="left:87.39999999999998px;top:268.00px;font-size:13px;line-height:13px;color:#262626;font-weight:400;font-family:"Liberation Sans", sans-serif;">LOAD_B</div>
<svg style="position:absolute;left:379px;top:267px;" width="16" height="16" viewBox="0 0 16 16"><g fill="none" stroke="#222" stroke-width="1.3" stroke-linejoin="round"><path d="M9.5 1.2L14.8 6.5L13.6 7L10.6 10.2L10.9 13L3 5.1L5.8 5.4L9 2.4Z"/><path d="M6.3 9.7L1.2 14.8"/></g></svg>
<div style="position:absolute;left:54px;top:302px;width:6px;height:1px;background:#e4e4e4"></div>
<svg style="position:absolute;left:65px;top:292px;" width="20" height="20" viewBox="0 0 20 20"><rect x="0.5" y="0.5" width="19" height="19" fill="#fff" stroke="#333" stroke-width="1"/><path d="M3 7.5H11V3.7L17 10L11 16.3V12.5H3Z" fill="#0c1d7e"/></svg>
<div class="t" style="left:87.39999999999998px;top:296.00px;font-size:13px;line-height:13px;color:#262626;font-weight:400;font-family:"Liberation Sans", sans-serif;">LOAD_C</div>
<svg style="position:absolute;left:379px;top:295px;" width="16" height="16" viewBox="0 0 16 16"><g fill="none" stroke="#222" stroke-width="1.3" stroke-linejoin="round"><path d="M9.5 1.2L14.8 6.5L13.6 7L10.6 10.2L10.9 13L3 5.1L5.8 5.4L9 2.4Z"/><path d="M6.3 9.7L1.2 14.8"/></g></svg>
<div style="position:absolute;left:54px;top:330px;width:6px;height:1px;background:#e4e4e4"></div>
<svg style="position:absolute;left:65px;top:320px;" width="20" height="20" viewBox="0 0 20 20"><rect x="0.5" y="0.5" width="19" height="19" fill="#fff" stroke="#333" stroke-width="1"/><path d="M3 7.5H11V3.7L17 10L11 16.3V12.5H3Z" fill="#0c1d7e"/></svg>
<div class="t" style="left:87.39999999999998px;top:324.00px;font-size:13px;line-height:13px;color:#262626;font-weight:400;font-family:"Liberation Sans", sans-serif;">MAIN_LOAD</div>
<svg style="position:absolute;left:379px;top:323px;" width="16" height="16" viewBox="0 0 16 16"><g fill="none" stroke="#222" stroke-width="1.3" stroke-linejoin="round"><path d="M9.5 1.2L14.8 6.5L13.6 7L10.6 10.2L10.9 13L3 5.1L5.8 5.4L9 2.4Z"/><path d="M6.3 9.7L1.2 14.8"/></g></svg>
<div style="position:absolute;left:54px;top:358px;width:6px;height:1px;background:#e4e4e4"></div>
<svg style="position:absolute;left:65px;top:348px;" width="20" height="20" viewBox="0 0 20 20"><rect x="0.5" y="0.5" width="19" height="19" fill="#fff" stroke="#333" stroke-width="1"/><path d="M3 7.5H11V3.7L17 10L11 16.3V12.5H3Z" fill="#0c1d7e"/></svg>
<div class="t" style="left:87.39999999999998px;top:352.00px;font-size:13px;line-height:13px;color:#262626;font-weight:400;font-family:"Liberation Sans", sans-serif;">REPORT</div>
<svg style="position:absolute;left:379px;top:351px;" width="16" height="16" viewBox="0 0 16 16"><g fill="none" stroke="#222" stroke-width="1.3" stroke-linejoin="round"><path d="M9.5 1.2L14.8 6.5L13.6 7L10.6 10.2L10.9 13L3 5.1L5.8 5.4L9 2.4Z"/><path d="M6.3 9.7L1.2 14.8"/></g></svg>
<div style="position:absolute;left:54px;top:386px;width:6px;height:1px;background:#e4e4e4"></div>
<svg style="position:absolute;left:65px;top:376px;" width="20" height="20" viewBox="0 0 20 20"><rect x="0.5" y="0.5" width="19" height="19" fill="#fff" stroke="#333" stroke-width="1"/><path d="M3 7.5H11V3.7L17 10L11 16.3V12.5H3Z" fill="#0c1d7e"/></svg>
<div class="t" style="left:87.39999999999998px;top:380.00px;font-size:13px;line-height:13px;color:#262626;font-weight:400;font-family:"Liberation Sans", sans-serif;">SELECT_LOAD</div>
<svg style="position:absolute;left:379px;top:379px;" width="16" height="16" viewBox="0 0 16 16"><g fill="none" stroke="#222" stroke-width="1.3" stroke-linejoin="round"><path d="M9.5 1.2L14.8 6.5L13.6 7L10.6 10.2L10.9 13L3 5.1L5.8 5.4L9 2.4Z"/><path d="M6.3 9.7L1.2 14.8"/></g></svg>
<svg style="position:absolute;left:65px;top:405px;" width="21" height="19" viewBox="0 0 21 19"><path d="M1 17V1H10.5L13 3.5H20V17Z" fill="#fff" stroke="#444" stroke-width="2" stroke-linejoin="miter"/><path d="M4.5 7.8H12V5.5L16.5 9.5L12 13.5V11.2H4.5Z" fill="#555"/></svg>
<div class="t" style="left:88.19999999999999px;top:408.00px;font-size:13px;line-height:13px;color:#262626;font-weight:400;font-family:"Liberation Sans", sans-serif;">E0060_JOBCOMM</div>
<svg style="position:absolute;left:49.5px;top:409.5px;" width="8" height="10" viewBox="0 0 8 10"><path d="M1.5 1L6 5L1.5 9" fill="none" stroke="#444" stroke-width="1.4"/></svg>
<svg style="position:absolute;left:379px;top:407px;" width="16" height="16" viewBox="0 0 16 16"><g fill="none" stroke="#222" stroke-width="1.3" stroke-linejoin="round"><path d="M9.5 1.2L14.8 6.5L13.6 7L10.6 10.2L10.9 13L3 5.1L5.8 5.4L9 2.4Z"/><path d="M6.3 9.7L1.2 14.8"/></g></svg>
<svg style="position:absolute;left:65px;top:433px;" width="21" height="19" viewBox="0 0 21 19"><path d="M1 17V1H10.5L13 3.5H20V17Z" fill="#fff" stroke="#444" stroke-width="2" stroke-linejoin="miter"/><path d="M4.5 7.8H12V5.5L16.5 9.5L12 13.5V11.2H4.5Z" fill="#555"/></svg>
<div class="t" style="left:88.19999999999999px;top:436.00px;font-size:13px;line-height:13px;color:#262626;font-weight:400;font-family:"Liberation Sans", sans-serif;">E0070_DYNSUBMIT</div>
<svg style="position:absolute;left:49.5px;top:437.5px;" width="8" height="10" viewBox="0 0 8 10"><path d="M1.5 1L6 5L1.5 9" fill="none" stroke="#444" stroke-width="1.4"/></svg>
<svg style="position:absolute;left:379px;top:435px;" width="16" height="16" viewBox="0 0 16 16"><g fill="none" stroke="#222" stroke-width="1.3" stroke-linejoin="round"><path d="M9.5 1.2L14.8 6.5L13.6 7L10.6 10.2L10.9 13L3 5.1L5.8 5.4L9 2.4Z"/><path d="M6.3 9.7L1.2 14.8"/></g></svg>
<svg style="position:absolute;left:65px;top:461px;" width="21" height="19" viewBox="0 0 21 19"><path d="M1 17V1H10.5L13 3.5H20V17Z" fill="#fff" stroke="#444" stroke-width="2" stroke-linejoin="miter"/><path d="M4.5 7.8H12V5.5L16.5 9.5L12 13.5V11.2H4.5Z" fill="#555"/></svg>
<div class="t" style="left:88.19999999999999px;top:464.00px;font-size:13px;line-height:13px;color:#262626;font-weight:400;font-family:"Liberation Sans", sans-serif;">E0075_LOADCONTROL</div>
<svg style="position:absolute;left:49.5px;top:465.5px;" width="8" height="10" viewBox="0 0 8 10"><path d="M1.5 1L6 5L1.5 9" fill="none" stroke="#444" stroke-width="1.4"/></svg>
<svg style="position:absolute;left:379px;top:463px;" width="16" height="16" viewBox="0 0 16 16"><g fill="none" stroke="#222" stroke-width="1.3" stroke-linejoin="round"><path d="M9.5 1.2L14.8 6.5L13.6 7L10.6 10.2L10.9 13L3 5.1L5.8 5.4L9 2.4Z"/><path d="M6.3 9.7L1.2 14.8"/></g></svg>
<svg style="position:absolute;left:65px;top:489px;" width="21" height="19" viewBox="0 0 21 19"><path d="M1 17V1H10.5L13 3.5H20V17Z" fill="#fff" stroke="#444" stroke-width="2" stroke-linejoin="miter"/><path d="M4.5 7.8H12V5.5L16.5 9.5L12 13.5V11.2H4.5Z" fill="#555"/></svg>
<div class="t" style="left:88.19999999999999px;top:492.00px;font-size:13px;line-height:13px;color:#262626;font-weight:400;font-family:"Liberation Sans", sans-serif;">E0080_LOADCONTROL_NEED</div>
<svg style="position:absolute;left:49.5px;top:493.5px;" width="8" height="10" viewBox="0 0 8 10"><path d="M1.5 1L6 5L1.5 9" fill="none" stroke="#444" stroke-width="1.4"/></svg>
<svg style="position:absolute;left:379px;top:491px;" width="16" height="16" viewBox="0 0 16 16"><g fill="none" stroke="#222" stroke-width="1.3" stroke-linejoin="round"><path d="M9.5 1.2L14.8 6.5L13.6 7L10.6 10.2L10.9 13L3 5.1L5.8 5.4L9 2.4Z"/><path d="M6.3 9.7L1.2 14.8"/></g></svg>
</div>
<div style="position:absolute;left:660px;top:254px;width:940px;height:1px;background:#dcdcdc"></div>
<svg style="position:absolute;left:678px;top:222px;" width="20" height="20" viewBox="0 0 20 20"><rect x="4.5" y="0.5" width="15" height="15" fill="#fff" stroke="#333"/><rect x="2.5" y="2.5" width="15" height="15" fill="#fff" stroke="#333"/><rect x="0.5" y="4.5" width="15" height="15" fill="#fff" stroke="#333"/><path d="M2.5 10.3H8.5V7.2L14 12L8.5 16.8V13.7H2.5Z" fill="#0c1d7e"/></svg>
<div class="t" style="left:707.8px;top:223.00px;font-size:14px;line-height:14px;color:#262626;font-weight:400;font-family:"Liberation Sans", sans-serif;">E0020_SIMPLEBATCH</div>
<svg style="position:absolute;left:870px;top:224px;" width="14" height="14" viewBox="0 0 14 14"><path d="M1 1L13 13M13 1L1 13" stroke="#555" stroke-width="2"/></svg>
<svg style="position:absolute;left:919px;top:222px;" width="20" height="20" viewBox="0 0 20 20"><rect x="4.5" y="0.5" width="15" height="15" fill="#fff" stroke="#333"/><rect x="2.5" y="2.5" width="15" height="15" fill="#fff" stroke="#333"/><rect x="0.5" y="4.5" width="15" height="15" fill="#fff" stroke="#333"/><path d="M2.5 10.3H8.5V7.2L14 12L8.5 16.8V13.7H2.5Z" fill="#0c1d7e"/></svg>
<div class="t" style="left:948.8px;top:223.00px;font-size:14px;line-height:14px;color:#262626;font-weight:400;font-family:"Liberation Sans", sans-serif;">COMPLEX_CONDITION</div>
<svg style="position:absolute;left:1119px;top:224px;" width="14" height="14" viewBox="0 0 14 14"><path d="M1 1L13 13M13 1L1 13" stroke="#555" stroke-width="2"/></svg>
<svg style="position:absolute;left:1166px;top:222px;" width="22" height="20" viewBox="0 0 22 20"><g fill="none" stroke="#555" stroke-width="1.3"><rect x="2.5" y="1.5" width="14.5" height="4"/><path d="M17 3.5H19.5V16.5H17.5"/><rect x="6.5" y="8.2" width="11" height="3.6"/><path d="M3.8 5.5V10H6.5M8 11.8V16H10"/><rect x="10" y="14.5" width="7.5" height="4" rx="1.5"/></g></svg>
<div class="t" style="left:1197.2px;top:223.00px;font-size:14px;line-height:14px;color:#262626;font-weight:400;font-family:"Liberation Sans", sans-serif;letter-spacing:0.08px">Hierarchy COMPLEX_CONDITION</div>
<svg style="position:absolute;left:1432px;top:224px;" width="14" height="14" viewBox="0 0 14 14"><path d="M1 1L13 13M13 1L1 13" stroke="#555" stroke-width="2"/></svg>
<div style="position:absolute;left:1149px;top:252px;width:314px;height:2px;background:#0b6b0b"></div>
<div style="position:absolute;left:660px;top:299px;width:707px;height:1px;background:#e4e4e4"></div>
<svg style="position:absolute;left:683.7px;top:270px" width="17" height="17" viewBox="16 30 464 464"><path fill="#444" d="M125.7 160H176c17.7 0 32 14.3 32 32s-14.3 32-32 32H48c-17.7 0-32-14.3-32-32V64c0-17.7 14.3-32 32-32s32 14.3 32 32v51.2L97.6 97.6c87.5-87.5 229.3-87.5 316.8 0s87.5 229.3 0 316.8s-229.3 87.5-316.8 0c-12.5-12.5-12.5-32.8 0-45.3s32.8-12.5 45.3 0c62.5 62.5 163.8 62.5 226.3 0s62.5-163.8 0-226.3s-163.8-62.5-226.3 0L125.7 160z"/></svg>
<div class="t" style="left:712.4px;top:270.00px;font-size:14px;line-height:14px;color:#262626;font-weight:400;font-family:"Liberation Sans", sans-serif;">refresh tree</div>
<svg style="position:absolute;left:815px;top:264px;" width="34" height="30" viewBox="0 0 34 30"><g fill="#fff" stroke="#555" stroke-width="1.5"><rect x="14.9" y="3.7" width="4.8" height="5"/><rect x="9.9" y="12.3" width="4.7" height="5"/><rect x="5.3" y="20.7" width="5.2" height="5"/></g><path d="M16 9.2L12.5 12M18.5 9.2L21.5 12H26M11 17.8L8.5 20.2M13.5 18V25.8H15" fill="none" stroke="#555" stroke-width="1.5"/><circle cx="23.2" cy="21.4" r="6" fill="#484848"/><path d="M18.3 21.4Q23.2 16.6 28.1 21.4Q23.2 26.2 18.3 21.4Z" fill="#fff"/><circle cx="23.2" cy="21.4" r="1.7" fill="#484848"/></svg>
<div class="t" style="left:851.8px;top:270.00px;font-size:14px;line-height:14px;color:#262626;font-weight:400;font-family:"Liberation Sans", sans-serif;">View</div>
<div style="position:absolute;left:1367px;top:255px;width:1px;height:495px;background:#dcdcdc"></div>
<div class="t" style="left:1377px;top:265.00px;font-size:14px;line-height:14px;color:#1f2a35;font-weight:700;font-family:"Liberation Sans", sans-serif;">Hierarchy description</div>
<div style="position:absolute;left:1370px;top:324px;width:228px;height:26px;background:#f0f5ee"></div>
<div style="position:absolute;left:1370px;top:380px;width:228px;height:26px;background:#f0f5ee"></div>
<div style="position:absolute;left:1370px;top:436px;width:228px;height:26px;background:#f0f5ee"></div>
<div style="position:absolute;left:1370px;top:492px;width:228px;height:26px;background:#f0f5ee"></div>
<div style="position:absolute;left:1398px;top:321px;width:1px;height:199px;background:#e0e0e0"></div>
<div style="position:absolute;left:1367px;top:530px;width:233px;height:1px;background:#e0e0e0"></div>
<svg style="position:absolute;left:1393px;top:305px;" width="10" height="7" viewBox="0 0 10 7"><path d="M1 1.2L5.0 5.6L9 1.2" fill="none" stroke="#444" stroke-width="1.4"/></svg>
<svg style="position:absolute;left:1412px;top:300px;" width="20" height="20" viewBox="0 0 20 20"><rect x="4.5" y="0.5" width="15" height="15" fill="#fff" stroke="#333"/><rect x="2.5" y="2.5" width="15" height="15" fill="#fff" stroke="#333"/><rect x="0.5" y="4.5" width="15" height="15" fill="#fff" stroke="#333"/><path d="M2.5 10.3H8.5V7.2L14 12L8.5 16.8V13.7H2.5Z" fill="#0c1d7e"/></svg>
<div class="t" style="left:1438.6px;top:302.00px;font-size:14px;line-height:14px;color:#262626;font-weight:400;font-family:"Liberation Sans", sans-serif;">COMPLEX_CONDITION</div>
<svg style="position:absolute;left:1413px;top:327.5px;" width="20" height="20" viewBox="0 0 20 20"><rect x="0.5" y="0.5" width="19" height="19" fill="#fff" stroke="#333" stroke-width="1"/><path d="M3 7.5H11V3.7L17 10L11 16.3V12.5H3Z" fill="#0c1d7e"/></svg>
<div class="t" style="left:1439.5px;top:330.00px;font-size:14px;line-height:14px;color:#262626;font-weight:400;font-family:"Liberation Sans", sans-serif;">LOAD_A</div>
<svg style="position:absolute;left:1413px;top:355.5px;" width="20" height="20" viewBox="0 0 20 20"><rect x="0.5" y="0.5" width="19" height="19" fill="#fff" stroke="#333" stroke-width="1"/><path d="M3 7.5H11V3.7L17 10L11 16.3V12.5H3Z" fill="#0c1d7e"/></svg>
<div class="t" style="left:1439.5px;top:358.00px;font-size:14px;line-height:14px;color:#262626;font-weight:400;font-family:"Liberation Sans", sans-serif;">LOAD_B</div>
<svg style="position:absolute;left:1413px;top:383.5px;" width="20" height="20" viewBox="0 0 20 20"><rect x="0.5" y="0.5" width="19" height="19" fill="#fff" stroke="#333" stroke-width="1"/><path d="M3 7.5H11V3.7L17 10L11 16.3V12.5H3Z" fill="#0c1d7e"/></svg>
<div class="t" style="left:1439.5px;top:386.00px;font-size:14px;line-height:14px;color:#262626;font-weight:400;font-family:"Liberation Sans", sans-serif;">LOAD_C</div>
<svg style="position:absolute;left:1413px;top:411px;" width="20" height="20" viewBox="0 0 20 20"><rect x="4.5" y="0.5" width="15" height="15" fill="#fff" stroke="#333"/><rect x="2.5" y="2.5" width="15" height="15" fill="#fff" stroke="#333"/><rect x="0.5" y="4.5" width="15" height="15" fill="#fff" stroke="#333"/><path d="M2.5 10.3H8.5V7.2L14 12L8.5 16.8V13.7H2.5Z" fill="#0c1d7e"/></svg>
<div class="t" style="left:1439.5px;top:414.00px;font-size:14px;line-height:14px;color:#262626;font-weight:400;font-family:"Liberation Sans", sans-serif;">LOAD_COMPLETED</div>
<svg style="position:absolute;left:1413px;top:439.5px;" width="20" height="20" viewBox="0 0 20 20"><rect x="0.5" y="0.5" width="19" height="19" fill="#fff" stroke="#333" stroke-width="1"/><path d="M3 7.5H11V3.7L17 10L11 16.3V12.5H3Z" fill="#0c1d7e"/></svg>
<div class="t" style="left:1439.5px;top:442.00px;font-size:14px;line-height:14px;color:#262626;font-weight:400;font-family:"Liberation Sans", sans-serif;">MAIN_LOAD</div>
<svg style="position:absolute;left:1413px;top:467.5px;" width="20" height="20" viewBox="0 0 20 20"><rect x="0.5" y="0.5" width="19" height="19" fill="#fff" stroke="#333" stroke-width="1"/><path d="M3 7.5H11V3.7L17 10L11 16.3V12.5H3Z" fill="#0c1d7e"/></svg>
<div class="t" style="left:1439.5px;top:470.00px;font-size:14px;line-height:14px;color:#262626;font-weight:400;font-family:"Liberation Sans", sans-serif;">REPORT</div>
<svg style="position:absolute;left:1413px;top:495.5px;" width="20" height="20" viewBox="0 0 20 20"><rect x="0.5" y="0.5" width="19" height="19" fill="#fff" stroke="#333" stroke-width="1"/><path d="M3 7.5H11V3.7L17 10L11 16.3V12.5H3Z" fill="#0c1d7e"/></svg>
<div class="t" style="left:1439.5px;top:498.00px;font-size:14px;line-height:14px;color:#262626;font-weight:400;font-family:"Liberation Sans", sans-serif;">SELECT_LOAD</div>
<div style="position:absolute;left:670px;top:457px;width:61px;height:258px;background:#fff;border-radius:5px;box-shadow:0 1px 5px rgba(0,0,0,0.07)"></div>
<svg style="position:absolute;left:660px;top:300px" width="707" height="450" viewBox="660 300 707 450"><path d="M1078 356V416.4" fill="none" stroke="#3a3a3a" stroke-width="1.1" stroke-dasharray="4.5 3.5"/><path d="M1077.7 416.4C980 422 887.5 428 887.5 466V648" fill="none" stroke="#3a3a3a" stroke-width="1.1" stroke-dasharray="4.5 3.5"/><path d="M1077.7 416.4C1005 424 966 434 965 468C964 500 962 508 954.5 524.5" fill="none" stroke="#3a3a3a" stroke-width="1.1" stroke-dasharray="4.5 3.5"/><path d="M1077.7 416.4C1040 428 1021 436 1021 456" fill="none" stroke="#3a3a3a" stroke-width="1.1" stroke-dasharray="4.5 3.5"/><path d="M1077.7 416.4C1090 430 1091.5 450 1091 470C1091 500 1085 510 1071 525" fill="none" stroke="#3a3a3a" stroke-width="1.1" stroke-dasharray="4.5 3.5"/><path d="M1077.7 416.4C1150 428 1168 438 1168 465C1168 500 1166 510 1158 525.5" fill="none" stroke="#3a3a3a" stroke-width="1.1" stroke-dasharray="4.5 3.5"/><path d="M1077.7 416.4C1170 428 1204 440 1204 466V605C1204 628 1190 636 1144.5 648.5" fill="none" stroke="#3a3a3a" stroke-width="1.1" stroke-dasharray="4.5 3.5"/><path d="M1077.7 416.4C1190 426 1240 438 1240 466V727C1240 741 1232 747 1212 754" fill="none" stroke="#3a3a3a" stroke-width="1.1" stroke-dasharray="4.5 3.5"/><path d="M983.2 486.5C950 498 925 506 932 523" fill="none" stroke="#4a5aa3" stroke-width="1.35"/><path d="M1021.3 487.5C1021 505 1026 515 1034.5 523" fill="none" stroke="#4a5aa3" stroke-width="1.35"/><path d="M1058.75 486.5C1090 500 1110 510 1126 523" fill="none" stroke="#4a5aa3" stroke-width="1.35"/><path d="M943.5 557.2C943 585 990 590 1063 601.5" fill="none" stroke="#4a5aa3" stroke-width="1.35"/><path d="M1049.2 557.2C1048 578 1056 588 1064.5 596" fill="none" stroke="#4a5aa3" stroke-width="1.35"/><path d="M1147.8 557.2C1150 585 1105 590 1077 601.5" fill="none" stroke="#4a5aa3" stroke-width="1.35"/><path d="M887.2 679C886 705 960 710 1041 722.5" fill="none" stroke="#4a5aa3" stroke-width="1.35"/><path d="M1102.5 679C1104 700 1075 708 1056.5 720.5" fill="none" stroke="#4a5aa3" stroke-width="1.35"/><path d="M1070.6 608.5C1070 630 1078 636 1085.5 644" fill="none" stroke="#666" stroke-width="1.5"/><path d="M1049.2 729.5C1049 738 1050.5 744 1051.3 752" fill="none" stroke="#666" stroke-width="1.5"/><path d="M933.00 527.00L929.29 522.07L934.80 521.10Z" fill="#4a9a4a"/><path d="M1036.50 526.50L1031.21 523.32L1035.96 520.35Z" fill="#4a9a4a"/><path d="M1129.00 526.50L1123.04 524.90L1126.79 520.74Z" fill="#4a9a4a"/><path d="M1065.50 602.00L1059.60 603.80L1060.57 598.29Z" fill="#4a9a4a"/><path d="M1066.50 598.00L1060.82 595.59L1065.11 591.99Z" fill="#4a9a4a"/><path d="M1075.50 602.00L1080.09 597.87L1081.54 603.28Z" fill="#4a9a4a"/><path d="M1043.50 723.50L1037.63 725.41L1038.51 719.87Z" fill="#4a9a4a"/><path d="M1054.50 722.00L1057.86 716.83L1060.66 721.67Z" fill="#4a9a4a"/><path d="M1087.70 647.50L1082.25 644.60L1086.84 641.39Z" fill="#888"/><path d="M1070.6 597.5L1075.8999999999999 602.8L1070.6 608.0999999999999L1065.3 602.8Z" fill="#fff" stroke="#444" stroke-width="1"/><path d="M1068.1 602.8H1073.1M1070.6 600.3V605.3" stroke="#444" stroke-width="0.8"/><path d="M1049.2 719.1L1054.5 724.4L1049.2 729.6999999999999L1043.9 724.4Z" fill="#fff" stroke="#444" stroke-width="1"/><path d="M1046.7 724.4H1051.7M1049.2 721.9V726.9" stroke="#444" stroke-width="0.8"/><rect x="1032.5" y="325.5" width="91" height="30.3" fill="#f2e7d4" stroke="#8c877c" stroke-width="1.1"/><path d="M1032.5 356.1H1123.5" stroke="#8c877c" stroke-width="1"/><text x="1046.9" y="331.8" font-family="Liberation Sans" font-size="6.6" fill="#2b2b2b">COMPLEX_CONDITION</text><text x="1046.9" y="341.1" font-family="Liberation Sans" font-size="6.6" fill="#2b2b2b">5202</text><text x="1046.9" y="350.0" font-family="Liberation Sans" font-size="6.6" fill="#2b2b2b">BATCH</text><path d="M1036.8 338.3V331.3L1038.3 329.8H1045.3V336.3L1043.8 338.3Z" fill="#6f6a60" stroke="#333" stroke-width="0.8"/><rect x="1036.8" y="331.8" width="7" height="6.5" fill="#e8e0cc" stroke="#222" stroke-width="0.8"/><path d="M1037.8 334.3H1040.3V332.8L1042.8 335.0L1040.3 337.3V335.8H1037.8Z" fill="#000"/><rect x="983.5" y="456.5" width="75.2" height="30.8" fill="#d1e6d2" stroke="#8a958a" stroke-width="1.1"/><path d="M983.5 487.6H1058.7" stroke="#8a958a" stroke-width="1"/><text x="997.9" y="462.8" font-family="Liberation Sans" font-size="6.6" fill="#2b2b2b">SELECT_LOAD</text><text x="997.9" y="472.1" font-family="Liberation Sans" font-size="6.6" fill="#2b2b2b">5224</text><text x="997.9" y="481.0" font-family="Liberation Sans" font-size="6.6" fill="#2b2b2b">JOB</text><rect x="987.8" y="460.8" width="8.5" height="8.5" fill="none" stroke="#222" stroke-width="0.9"/><path d="M989.0999999999999 464.1H992.3V462.3L995.3 465.1L992.3 467.90000000000003V466.1H989.0999999999999Z" fill="#000"/><rect x="905.6" y="526.8" width="75.5" height="30.4" fill="#d1e6d2" stroke="#8a958a" stroke-width="1.1"/><path d="M905.6 557.4999999999999H981.1" stroke="#8a958a" stroke-width="1"/><text x="920.0" y="533.0999999999999" font-family="Liberation Sans" font-size="6.6" fill="#2b2b2b">LOAD_B</text><text x="920.0" y="542.4" font-family="Liberation Sans" font-size="6.6" fill="#2b2b2b">5207</text><text x="920.0" y="551.3" font-family="Liberation Sans" font-size="6.6" fill="#2b2b2b">JOB</text><rect x="909.9" y="531.0999999999999" width="8.5" height="8.5" fill="none" stroke="#222" stroke-width="0.9"/><path d="M911.1999999999999 534.3999999999999H914.4V532.5999999999999L917.4 535.3999999999999L914.4 538.1999999999999V536.3999999999999H911.1999999999999Z" fill="#000"/><rect x="1011.4" y="526.8" width="75.4" height="30.4" fill="#d1e6d2" stroke="#8a958a" stroke-width="1.1"/><path d="M1011.4 557.4999999999999H1086.8" stroke="#8a958a" stroke-width="1"/><text x="1025.8" y="533.0999999999999" font-family="Liberation Sans" font-size="6.6" fill="#2b2b2b">LOAD_C</text><text x="1025.8" y="542.4" font-family="Liberation Sans" font-size="6.6" fill="#2b2b2b">5211</text><text x="1025.8" y="551.3" font-family="Liberation Sans" font-size="6.6" fill="#2b2b2b">JOB</text><rect x="1015.6999999999999" y="531.0999999999999" width="8.5" height="8.5" fill="none" stroke="#222" stroke-width="0.9"/><path d="M1016.9999999999999 534.3999999999999H1020.1999999999999V532.5999999999999L1023.1999999999999 535.3999999999999L1020.1999999999999 538.1999999999999V536.3999999999999H1016.9999999999999Z" fill="#000"/><rect x="1110.5" y="526.8" width="75.2" height="30.4" fill="#d1e6d2" stroke="#8a958a" stroke-width="1.1"/><path d="M1110.5 557.4999999999999H1185.7" stroke="#8a958a" stroke-width="1"/><text x="1124.9" y="533.0999999999999" font-family="Liberation Sans" font-size="6.6" fill="#2b2b2b">LOAD_A</text><text x="1124.9" y="542.4" font-family="Liberation Sans" font-size="6.6" fill="#2b2b2b">5203</text><text x="1124.9" y="551.3" font-family="Liberation Sans" font-size="6.6" fill="#2b2b2b">JOB</text><rect x="1114.8" y="531.0999999999999" width="8.5" height="8.5" fill="none" stroke="#222" stroke-width="0.9"/><path d="M1116.1 534.3999999999999H1119.3V532.5999999999999L1122.3 535.3999999999999L1119.3 538.1999999999999V536.3999999999999H1116.1Z" fill="#000"/><rect x="849.4" y="648.3" width="75.4" height="30.8" fill="#d1e6d2" stroke="#8a958a" stroke-width="1.1"/><path d="M849.4 679.3999999999999H924.8" stroke="#8a958a" stroke-width="1"/><text x="863.8" y="654.5999999999999" font-family="Liberation Sans" font-size="6.6" fill="#2b2b2b">MAIN_LOAD</text><text x="863.8" y="663.9" font-family="Liberation Sans" font-size="6.6" fill="#2b2b2b">5216</text><text x="863.8" y="672.8" font-family="Liberation Sans" font-size="6.6" fill="#2b2b2b">JOB</text><rect x="853.6999999999999" y="652.5999999999999" width="8.5" height="8.5" fill="none" stroke="#222" stroke-width="0.9"/><path d="M854.9999999999999 655.8999999999999H858.1999999999999V654.0999999999999L861.1999999999999 656.8999999999999L858.1999999999999 659.6999999999999V657.8999999999999H854.9999999999999Z" fill="#000"/><rect x="1064.3" y="648.3" width="77.3" height="30.8" fill="#f2e7d4" stroke="#8c877c" stroke-width="1.1"/><path d="M1064.3 679.3999999999999H1141.6" stroke="#8c877c" stroke-width="1"/><text x="1078.7" y="654.5999999999999" font-family="Liberation Sans" font-size="6.6" fill="#2b2b2b">LOAD_COMPLETED</text><text x="1078.7" y="663.9" font-family="Liberation Sans" font-size="6.6" fill="#2b2b2b">5215</text><text x="1078.7" y="672.8" font-family="Liberation Sans" font-size="6.6" fill="#2b2b2b">BATCH</text><path d="M1068.6 661.0999999999999V654.0999999999999L1070.1 652.5999999999999H1077.1V659.0999999999999L1075.6 661.0999999999999Z" fill="#6f6a60" stroke="#333" stroke-width="0.8"/><rect x="1068.6" y="654.5999999999999" width="7" height="6.5" fill="#e8e0cc" stroke="#222" stroke-width="0.8"/><path d="M1069.6 657.0999999999999H1072.1V655.5999999999999L1074.6 657.8L1072.1 660.0999999999999V658.5999999999999H1069.6Z" fill="#000"/><circle cx="1130.7" cy="330.9" r="4.4" fill="#fff" stroke="#555" stroke-width="0.9"/><path d="M1128.6 330L1130.7 332.1L1132.8 330" fill="none" stroke="#555" stroke-width="0.8"/></svg>
<svg style="position:absolute;left:660px;top:450px" width="80" height="250" viewBox="660 450 80 250"><path d="M695.5 485.5H700L705.5 480M700 485.5H705.5" fill="none" stroke="#666" stroke-width="1.1"/><rect x="690.5" y="483" width="5" height="5" fill="#fff" stroke="#555" stroke-width="1.1"/><rect x="705.5" y="476.5" width="5" height="5" fill="#fff" stroke="#555" stroke-width="1.1"/><rect x="705.5" y="483" width="5" height="5" fill="#fff" stroke="#555" stroke-width="1.1"/><path d="M707 490H710V494H707" fill="none" stroke="#666" stroke-width="0.9"/><path d="M695.8 490.5H704.2M700 486.3V494.7" stroke="#1a8a1a" stroke-width="2.4"/><path d="M695.5 526.5H700L705.5 521M700 526.5H705.5" fill="none" stroke="#666" stroke-width="1.1"/><rect x="690.5" y="524" width="5" height="5" fill="#fff" stroke="#555" stroke-width="1.1"/><rect x="705.5" y="517.5" width="5" height="5" fill="#fff" stroke="#555" stroke-width="1.1"/><rect x="705.5" y="524" width="5" height="5" fill="#fff" stroke="#555" stroke-width="1.1"/><path d="M707 531H710V535H707" fill="none" stroke="#666" stroke-width="0.9"/><path d="M692.5 516V522M690.3 519.8L692.5 522.3L694.7 519.8" fill="none" stroke="#555" stroke-width="1.1"/><path d="M695.8 531.5H704.2M700 527.3V535.7" stroke="#1a8a1a" stroke-width="2.4"/><path d="M695.5 566.0H700L705.5 560.5M700 566.0H705.5" fill="none" stroke="#666" stroke-width="1.1"/><rect x="690.5" y="563.5" width="5" height="5" fill="#fff" stroke="#555" stroke-width="1.1"/><rect x="705.5" y="557.0" width="5" height="5" fill="#fff" stroke="#555" stroke-width="1.1"/><rect x="705.5" y="563.5" width="5" height="5" fill="#fff" stroke="#555" stroke-width="1.1"/><path d="M707 570.5H710V574.5H707" fill="none" stroke="#666" stroke-width="0.9"/><path d="M699.1 569.9L704.9 575.6999999999999M704.9 569.9L699.1 575.6999999999999" stroke="#c8202a" stroke-width="1.9"/><path d="M692.5 622.5V634.5M692.5 626.5H705.5" fill="none" stroke="#666" stroke-width="1.2"/><rect x="690.5" y="618.0" width="4.5" height="4.5" fill="#fff" stroke="#555" stroke-width="1.1"/><rect x="705.5" y="624.0" width="4.5" height="4.5" fill="#fff" stroke="#555" stroke-width="1.1"/><rect x="705.5" y="631.0" width="4.5" height="4.5" fill="#555"/><path d="M694.3 631H702.7M698.5 626.8V635.2" stroke="#1a8a1a" stroke-width="2.4"/><path d="M692.5 662.5V674.5M692.5 666.5H705.5" fill="none" stroke="#666" stroke-width="1.2"/><rect x="690.5" y="658.0" width="4.5" height="4.5" fill="#fff" stroke="#555" stroke-width="1.1"/><rect x="705.5" y="664.0" width="4.5" height="4.5" fill="#fff" stroke="#555" stroke-width="1.1"/><rect x="705.5" y="671.0" width="4.5" height="4.5" fill="#555"/><path d="M696.1 669.1L701.9 674.9M701.9 669.1L696.1 674.9" stroke="#c8202a" stroke-width="1.9"/></svg>
</body></html>
